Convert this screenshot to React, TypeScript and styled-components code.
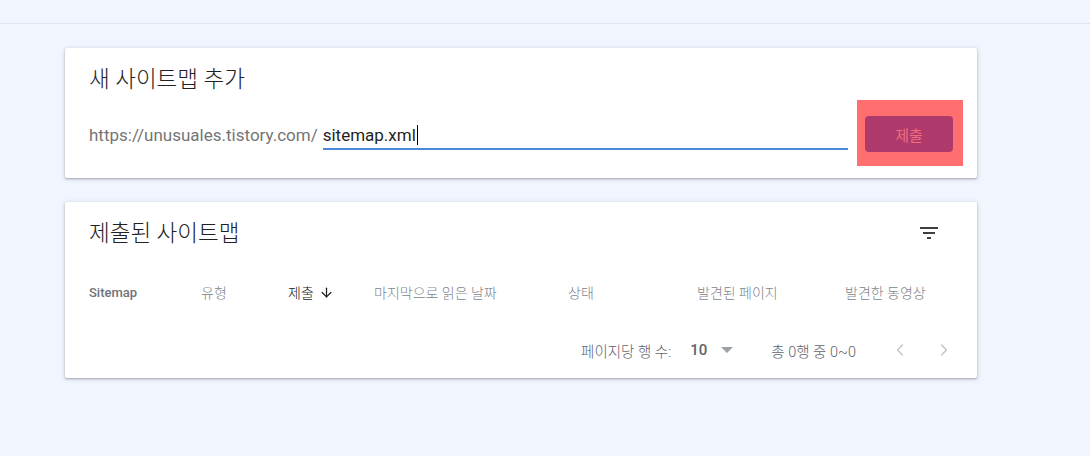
import React from 'react';
import styled, { createGlobalStyle } from 'styled-components';
import { ArrowDown, ChevronLeft, ChevronRight } from 'lucide-react';

const FONT = `Roboto, "Noto Sans CJK KR", "Noto Sans", sans-serif`;

const GlobalStyle = createGlobalStyle`
  html, body {
    margin: 0;
    padding: 0;
    background: #f1f5fd;
    font-family: ${FONT};
  }
  * { box-sizing: border-box; }
`;

const TopBar = styled.div`
  height: 24px;
  border-bottom: 1px solid #dfe4ee;
`;

const Main = styled.main`
  padding: 24px 0 40px 65px;
  display: flex;
  flex-direction: column;
  gap: 24px;
`;

const Card = styled.section<{ $height: number; $top: number }>`
  width: 912px;
  height: ${({ $height }) => $height}px;
  padding-top: ${({ $top }) => $top}px;
  background: #fff;
  border-radius: 2px;
  box-shadow: 0 1px 2px rgba(60, 64, 67, 0.35), 0 1px 4px 1px rgba(60, 64, 67, 0.12);
  display: flex;
  flex-direction: column;
`;

const CardHead = styled.div`
  display: flex;
  align-items: center;
  justify-content: space-between;
  padding: 0 36px 0 24px;
  height: 30px;
`;

const Title = styled.h2`
  margin: 0;
  font-size: 22.5px;
  font-weight: 300;
  color: #202124;
  line-height: 30px;
`;

const InputRow = styled.div`
  display: flex;
  align-items: center;
  padding: 0 14px 0 24px;
  margin-top: 6px;
`;

const Prefix = styled.span`
  font-size: 17px;
  color: #757575;
  margin-right: 5px;
  padding-top: 4px;
`;

const Field = styled.div`
  flex: 1;
  height: 32px;
  border-bottom: 2px solid #4a87d6;
  display: flex;
  align-items: flex-end;
  padding-bottom: 3px;
  margin-top: 2px;
  font-size: 17px;
  font-weight: 400;
  color: #1f1f1f;
`;

const Caret = styled.span`
  display: inline-block;
  width: 1px;
  height: 20px;
  background: #000;
  margin-left: 1px;
`;

const Highlight = styled.div`
  margin-left: 9px;
  background: #ff6f6f;
  padding: 16px 10px 14px 8px;
`;

const SubmitButton = styled.button`
  width: 88px;
  height: 36px;
  border: none;
  border-radius: 4px;
  background: #ad3a6a;
  color: #f06d84;
  font-family: ${FONT};
  font-size: 15px;
  font-weight: 400;
  cursor: pointer;
`;

const HeaderRow = styled.div`
  display: grid;
  grid-template-columns: 112px 87px 86px 194px 129px 148px 1fr;
  align-items: center;
  padding-left: 24px;
  margin-top: 32px;
  height: 24px;
`;

const HeaderCell = styled.div<{ $active?: boolean; $bold?: boolean }>`
  display: flex;
  align-items: center;
  gap: 5px;
  font-size: ${({ $bold }) => ($bold ? 13 : 14)}px;
  font-weight: ${({ $bold }) => ($bold ? 500 : 300)};
  color: ${({ $active, $bold }) => ($active ? '#202124' : $bold ? '#6f7378' : '#80868b')};
`;

const Footer = styled.div`
  display: flex;
  align-items: center;
  justify-content: flex-end;
  padding-right: 23px;
  margin-top: 34px;
  height: 24px;
  font-size: 14.5px;
  font-weight: 300;
  color: #5f6368;
`;

const PerPage = styled.span`
  margin-right: 19px;
`;

const PageSize = styled.span`
  font-size: 15px;
  font-weight: 500;
  color: #5f6368;
  margin-right: 14px;
`;

const Triangle = styled.span`
  width: 0;
  height: 0;
  border-left: 6px solid transparent;
  border-right: 6px solid transparent;
  border-top: 6px solid #9aa0a6;
  margin-right: 38px;
`;

const Range = styled.span`
  margin-right: 34px;
`;

const NavButton = styled.span`
  display: flex;
  align-items: center;
  justify-content: center;
  width: 20px;
  color: #bdc1c6;
  & + & { margin-left: 24px; }
`;

const FilterIcon = () => (
  <svg width="24" height="24" viewBox="0 0 24 24" fill="#3c4043">
    <rect x="3" y="6" width="18" height="2" />
    <rect x="6" y="11" width="12" height="2" />
    <rect x="10" y="16" width="4" height="2" />
  </svg>
);

const columns = ['유형', '제출', '마지막으로 읽은 날짜', '상태', '발견된 페이지', '발견한 동영상'];

export default function App() {
  return (
    <>
      <GlobalStyle />
      <TopBar />
      <Main>
        <Card $height={130} $top={16}>
          <CardHead>
            <Title>새 사이트맵 추가</Title>
          </CardHead>
          <InputRow>
            <Prefix>https://unusuales.tistory.com/</Prefix>
            <Field>
              sitemap.xml
              <Caret />
            </Field>
            <Highlight>
              <SubmitButton>제출</SubmitButton>
            </Highlight>
          </InputRow>
        </Card>

        <Card $height={176} $top={16}>
          <CardHead>
            <Title>제출된 사이트맵</Title>
            <FilterIcon />
          </CardHead>
          <HeaderRow>
            <HeaderCell $bold>Sitemap</HeaderCell>
            {columns.map((c) => (
              <HeaderCell key={c} $active={c === '제출'}>
                {c}
                {c === '제출' && <ArrowDown size={15} strokeWidth={2} color="#202124" />}
              </HeaderCell>
            ))}
          </HeaderRow>
          <Footer>
            <PerPage>페이지당 행 수:</PerPage>
            <PageSize>10</PageSize>
            <Triangle />
            <Range>총 0행 중 0~0</Range>
            <NavButton>
              <ChevronLeft size={20} strokeWidth={1.5} />
            </NavButton>
            <NavButton>
              <ChevronRight size={20} strokeWidth={1.5} />
            </NavButton>
          </Footer>
        </Card>
      </Main>
    </>
  );
}
